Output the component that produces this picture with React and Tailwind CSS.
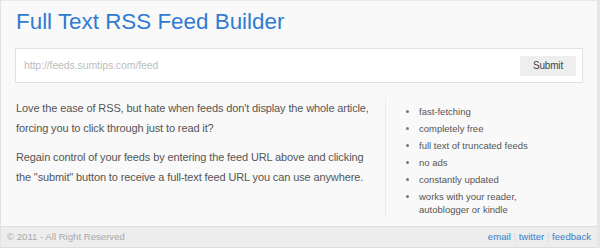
export default function App() {
  const features = [
    "fast-fetching",
    "completely free",
    "full text of truncated feeds",
    "no ads",
    "constantly updated",
    "works with your reader, autoblogger or kindle",
  ];

  return (
    <div
      className="w-[600px] h-[248px] flex flex-col bg-[#f9f9f9] border-l border-r-[3px] border-[#e2e2e2] border-r-[#e6e6e6] overflow-hidden"
      style={{ fontFamily: '"Liberation Sans", Arial, sans-serif' }}
    >
      <div className="border-t border-dotted border-[#dcdcdc] px-[14px] pt-[7px] flex-1 flex flex-col">
        <h1 className="text-[22.4px] leading-[28px] text-[#2f7bd0] pl-[1px]">
          Full Text RSS Feed Builder
        </h1>

        <div className="mt-[12px] h-[35px] bg-white border border-[#e0e0e0] flex items-center pl-[8px] pr-[6px]">
          <input
            className="flex-1 text-[10.5px] tracking-[-0.1px] text-[#555] placeholder:text-[#bdbdbd] outline-none bg-transparent"
            placeholder="http://feeds.sumtips.com/feed"
          />
          <button className="w-[56px] h-[20px] bg-[#eeeeee] text-[10px] tracking-[-0.2px] text-[#444]">
            Submit
          </button>
        </div>

        <div className="flex mt-[14px] flex-1">
          <div className="w-[370px] pr-[4px] text-[11px] tracking-[-0.12px] leading-[20px] text-[#555] pl-[1px] pt-[1px]">
            <p>
              Love the ease of RSS, but hate when feeds don't display the whole
              article, forcing you to click through just to read it?
            </p>
            <p className="mt-[9px]">
              Regain control of your feeds by entering the feed URL above and
              clicking the "submit" button to receive a full-text feed URL you
              can use anywhere.
            </p>
          </div>
          <div className="border-l border-[#ececec] pl-[23px] pt-[8px] mb-[8px]">
            <ul className="list-disc pl-[10px] text-[9.5px] leading-[13px] text-[#555] w-[130px] flex flex-col gap-[4px]">
              {features.map((f) => (
                <li key={f} className="marker:text-[#777]">
                  {f}
                </li>
              ))}
            </ul>
          </div>
        </div>
      </div>

      <div className="h-[22px] bg-[#ededed] border-t border-b border-[#dddddd] flex items-center justify-between px-[6px] text-[9.6px]">
        <span className="text-[#aaaaaa]">© 2011 - All Right Reserved</span>
        <span className="text-[#cfd8e0]">
          <a className="text-[#3a7ccc]">email</a> |{" "}
          <a className="text-[#3a7ccc]">twitter</a> |{" "}
          <a className="text-[#3a7ccc]">feedback</a>
        </span>
      </div>
    </div>
  );
}
